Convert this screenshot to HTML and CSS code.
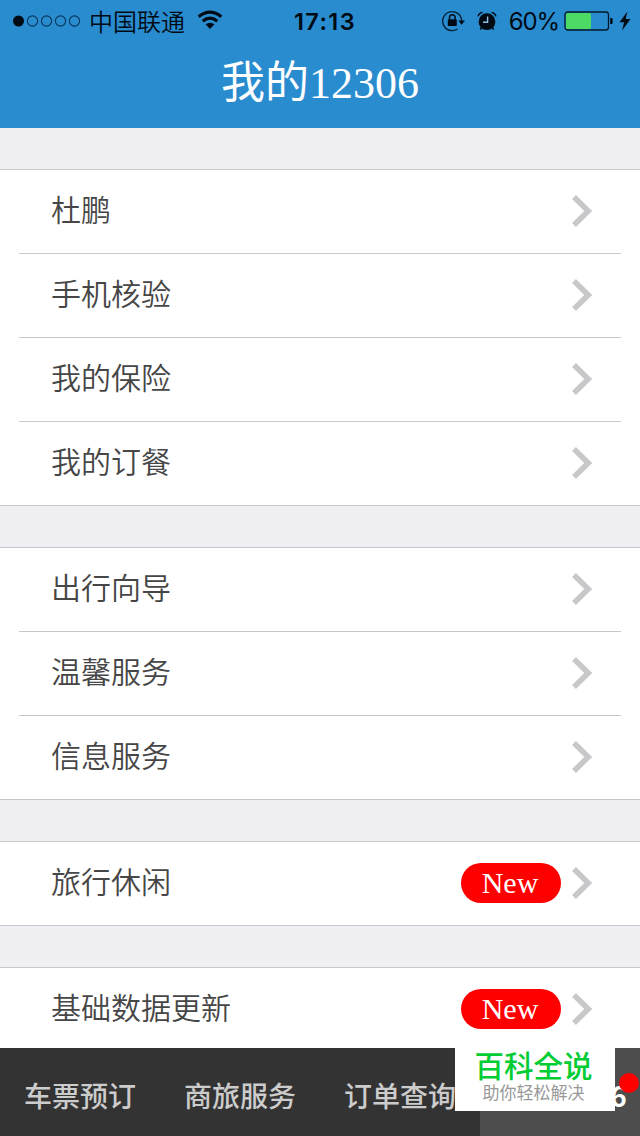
FILE: index.html
```html
<!DOCTYPE html>
<html lang="zh-CN">
<head>
<meta charset="utf-8">
<title>我的12306</title>
<link rel="stylesheet" href="styles.css">
</head>
<body>
<svg class="defs" aria-hidden="true"><symbol id="chevron" viewBox="0 0 22 36"><path d="M3 4 L17.2 18 L3 32" fill="none" stroke="#c8c8ca" stroke-width="5.6"/></symbol></svg>
<div class="screen">
  <header class="header">
    <div class="status">
      <div class="status-left">
        <svg class="signal" viewBox="0 0 70 16"><circle cx="6.5" cy="8" r="5.5" fill="#000a14"/><g fill="none" stroke="#06365b" stroke-width="1.1"><circle cx="20.5" cy="8" r="5.1"/><circle cx="34.5" cy="8" r="5.1"/><circle cx="48.5" cy="8" r="5.1"/><circle cx="62.5" cy="8" r="5.1"/></g></svg>
        <span class="carrier">中国联通</span>
        <svg class="wifi" viewBox="0 0 26 20"><g fill="none" stroke="#000a14" stroke-width="3.1"><path d="M1.7 6.7 Q13 -2.5 24.3 6.7"/><path d="M5.7 11.2 Q13 5.2 20.3 11.2"/></g><path d="M8.5 14.3 Q13 11.3 17.5 14.3 L13 19Z" fill="#000a14"/></svg>
      </div>
      <span class="time">17:13</span>
      <div class="status-right">
        <svg class="lock" viewBox="0 0 24 22"><path d="M20.7 10.8 A9.5 9.5 0 1 0 16.5 19" fill="none" stroke="#032238" stroke-width="1.4"/><path d="M17.3 10.5H24L20.6 14.7Z" fill="#000a14"/><rect x="6.8" y="9.3" width="9" height="6.8" rx=".8" fill="#000a14"/><path d="M8.5 9.5V7.5a2.8 2.8 0 0 1 5.6 0v2" fill="none" stroke="#000a14" stroke-width="1.5"/></svg>
        <svg class="alarm" viewBox="0 0 20 20"><circle cx="10" cy="10.7" r="8.4" fill="#000a14"/><path d="M1 5.4 Q1.8 2 5.4 1.3M14.6 1.3Q18.2 2 19 5.4" fill="none" stroke="#000a14" stroke-width="1.3"/><path d="M4.6 16.5L3.4 18.5M15.4 16.5L16.6 18.5" stroke="#000a14" stroke-width="1.6"/><path d="M10.6 5.6V11.3H6" fill="none" stroke="#8fc1e5" stroke-width="1.4"/></svg>
        <span class="percent">60%</span>
        <svg class="battery" viewBox="0 0 50 20"><rect x="1" y="1" width="43.5" height="18" rx="2.8" fill="none" stroke="#03192b" stroke-width="1.3"/><rect x="2" y="2" width="25" height="16" rx="1.5" fill="#4cd964"/><path d="M46.2 7h1.2q1.2 0 1.2 1.2v3.6q0 1.2-1.2 1.2h-1.2z" fill="#000a14"/></svg>
        <svg class="bolt" viewBox="0 0 12 20"><path d="M8.4 .5L.5 11.2H5.1L3.1 19.5L11.5 8.1H6.7Z" fill="#000a14"/></svg>
      </div>
    </div>
    <h1 class="title">我的12306</h1>
  </header>
  <main class="content">
    <section class="group">
      <div class="row"><span class="label">杜鹏</span><svg class="chevron"><use href="#chevron"/></svg></div>
      <div class="row"><span class="label">手机核验</span><svg class="chevron"><use href="#chevron"/></svg></div>
      <div class="row"><span class="label">我的保险</span><svg class="chevron"><use href="#chevron"/></svg></div>
      <div class="row"><span class="label">我的订餐</span><svg class="chevron"><use href="#chevron"/></svg></div>
    </section>
    <section class="group">
      <div class="row"><span class="label">出行向导</span><svg class="chevron"><use href="#chevron"/></svg></div>
      <div class="row"><span class="label">温馨服务</span><svg class="chevron"><use href="#chevron"/></svg></div>
      <div class="row"><span class="label">信息服务</span><svg class="chevron"><use href="#chevron"/></svg></div>
    </section>
    <section class="group">
      <div class="row"><span class="label">旅行休闲</span><span class="new">New</span><svg class="chevron"><use href="#chevron"/></svg></div>
    </section>
    <section class="group">
      <div class="row"><span class="label">基础数据更新</span><span class="new">New</span><svg class="chevron"><use href="#chevron"/></svg></div>
    </section>
  </main>
  <nav class="tabs">
    <div class="tab">车票预订</div>
    <div class="tab">商旅服务</div>
    <div class="tab">订单查询</div>
    <div class="tab tab-active">我的12306<i class="dot"></i></div>
  </nav>
  <aside class="watermark"><strong class="mark-name">百科全说</strong><span class="mark-line">助你轻松解决</span></aside>
</div>
</body>
</html>
```
FILE: styles.css
```css
* { box-sizing: border-box; }
body { margin: 0; }
.defs { display: none; }
.screen {
  position: relative;
  display: flex;
  flex-direction: column;
  width: 640px;
  height: 1136px;
  overflow: hidden;
  background: #efeff4;
  font-family: "Noto Sans CJK SC", sans-serif;
}
.header { flex: none; height: 128px; background: #298ccf; }
.status {
  display: grid;
  grid-template-columns: 1fr auto 1fr;
  align-items: center;
  height: 40px;
  padding: 0 9px 0 12px;
  color: #000a14;
}
.status-left, .status-right { display: flex; align-items: center; height: 40px; }
.status-right { justify-content: flex-end; }
.signal { width: 70px; height: 16px; }
.carrier { margin-left: 7px; font-size: 24px; line-height: 40px; font-weight: 350; }
.wifi { width: 26px; height: 20px; margin-left: 12px; margin-top: -2px; }
.time { padding: 2px 0 0 7px; font: 600 23.5px/40px Inter, sans-serif; letter-spacing: 1.4px; }
.lock { width: 24px; height: 22px; }
.alarm { width: 20px; height: 20px; margin-left: 12px; }
.percent { margin-left: 12px; padding-top: 2px; font: 400 24px/40px Inter, sans-serif; letter-spacing: -1.1px; }
.battery { width: 50px; height: 20px; margin-left: 5px; }
.bolt { width: 12px; height: 20px; margin-left: 5px; }
.title {
  margin: 0;
  padding-top: 2px;
  color: #fff;
  text-align: center;
  font: 400 44px/84px "Liberation Serif", "Noto Sans CJK SC", sans-serif;
}
.content { flex: 1; min-height: 0; overflow: hidden; padding-top: 41px; }
.group { margin-bottom: 41px; padding: 0 19px; background: #fff; border: solid #c8c7cc; border-width: 1px 0; }
.row {
  display: flex;
  align-items: center;
  height: 84px;
  padding: 0 28px 2px 32px;
  border-bottom: 1px solid #c8c7cc;
}
.row:last-child { height: 83px; border-bottom: 0; padding-bottom: 1px; }
.label { flex: 1; color: #464646; font-size: 30px; line-height: 44px; font-weight: 350; padding-bottom: 6px; }
.new {
  width: 100px;
  height: 40px;
  margin-right: 10px;
  padding-right: 2px;
  border-radius: 20px;
  background: #f00;
  color: #fff;
  text-align: center;
  font: 400 30px/40px "Liberation Serif", serif;
}
.chevron { width: 22px; height: 36px; }
.tabs { flex: none; display: flex; height: 88px; background: #333; }
.tab {
  position: relative;
  flex: 0 0 160px;
  padding-top: 7px;
  color: #ccc;
  text-align: center;
  white-space: nowrap;
  font-size: 28px;
  line-height: 80px;
  font-weight: 500;
}
.tab-active { background: #4d4d4d; color: #fff; font-weight: 700; padding-right: 5px; }
.dot { position: absolute; right: 1px; top: 25px; width: 20px; height: 20px; border-radius: 50%; background: #f00; }
.watermark {
  position: absolute;
  left: 455px;
  top: 1044px;
  width: 160px;
  height: 67px;
  padding: 1px 3px 0 0;
  display: flex;
  flex-direction: column;
  align-items: center;
  background: #fff;
}
.mark-name { color: #00cc33; font-size: 29.5px; line-height: 38px; font-weight: 500; }
.mark-line { color: #999; font-size: 17px; line-height: 18px; }
```
